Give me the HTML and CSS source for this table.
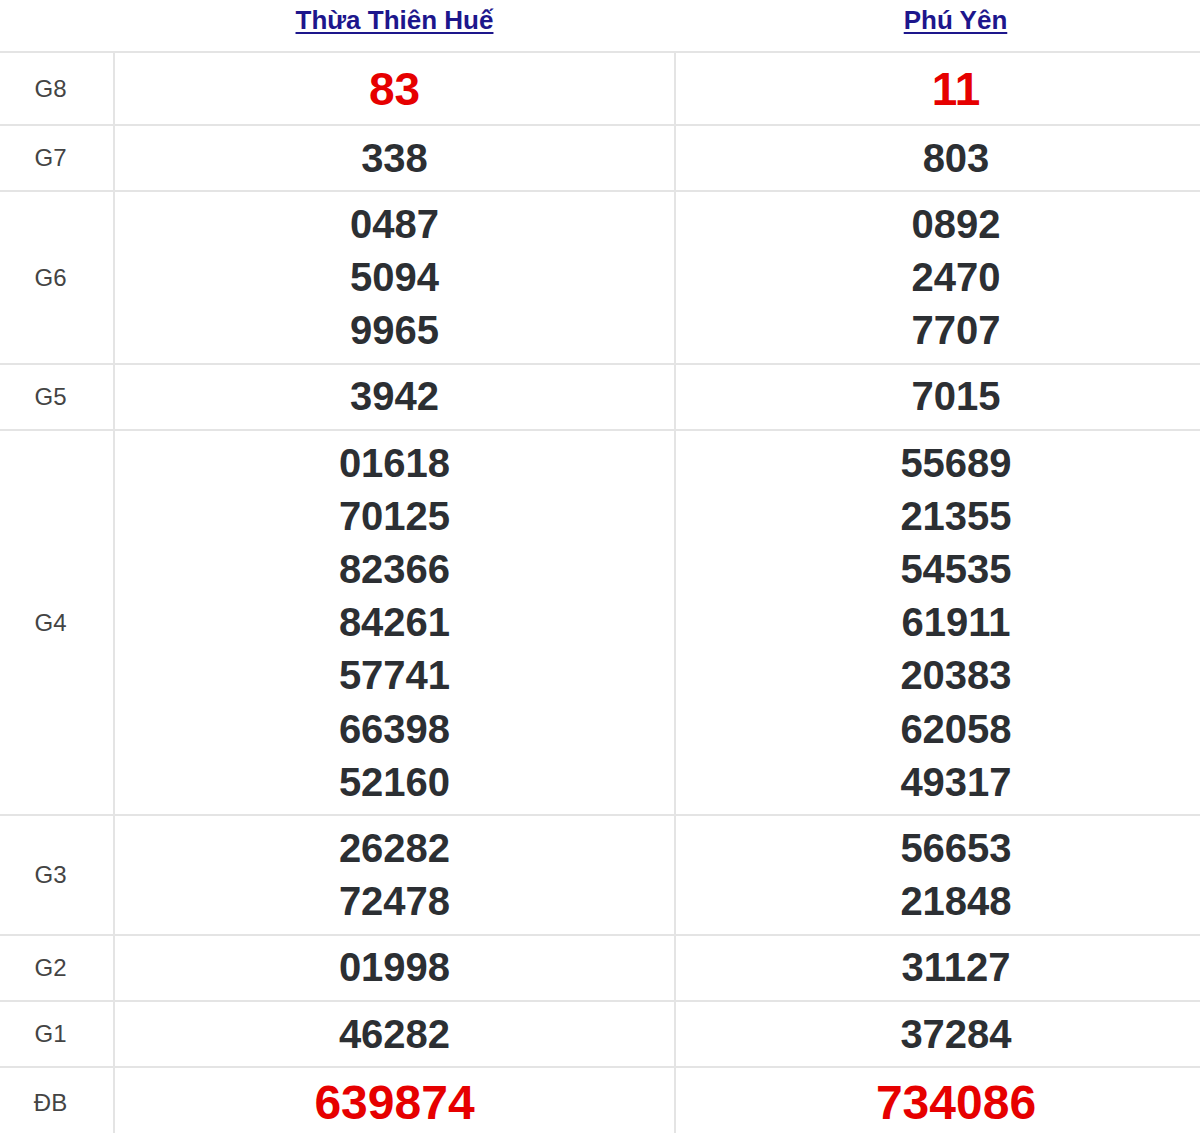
FILE: index.html
```html
<!DOCTYPE html>
<html lang="vi">
<head>
<meta charset="utf-8">
<title>Kết quả xổ số</title>
<link rel="stylesheet" href="styles.css">
</head>
<body>
<div class="wrap">
<table class="kq">
  <colgroup>
    <col class="c-label">
    <col class="c-prov">
    <col class="c-prov">
  </colgroup>
  <thead>
    <tr>
      <th class="h-label"></th>
      <th class="h-prov"><a href="#">Thừa Thiên Huế</a></th>
      <th class="h-prov"><a href="#">Phú Yên</a></th>
    </tr>
  </thead>
  <tbody>
    <tr class="g8">
      <td class="lbl">G8</td>
      <td class="num red"><div>83</div></td>
      <td class="num red"><div>11</div></td>
    </tr>
    <tr>
      <td class="lbl">G7</td>
      <td class="num"><div>338</div></td>
      <td class="num"><div>803</div></td>
    </tr>
    <tr>
      <td class="lbl">G6</td>
      <td class="num"><div>0487</div><div>5094</div><div>9965</div></td>
      <td class="num"><div>0892</div><div>2470</div><div>7707</div></td>
    </tr>
    <tr>
      <td class="lbl">G5</td>
      <td class="num"><div>3942</div></td>
      <td class="num"><div>7015</div></td>
    </tr>
    <tr>
      <td class="lbl">G4</td>
      <td class="num"><div>01618</div><div>70125</div><div>82366</div><div>84261</div><div>57741</div><div>66398</div><div>52160</div></td>
      <td class="num"><div>55689</div><div>21355</div><div>54535</div><div>61911</div><div>20383</div><div>62058</div><div>49317</div></td>
    </tr>
    <tr>
      <td class="lbl">G3</td>
      <td class="num"><div>26282</div><div>72478</div></td>
      <td class="num"><div>56653</div><div>21848</div></td>
    </tr>
    <tr>
      <td class="lbl">G2</td>
      <td class="num"><div>01998</div></td>
      <td class="num"><div>31127</div></td>
    </tr>
    <tr>
      <td class="lbl">G1</td>
      <td class="num"><div>46282</div></td>
      <td class="num"><div>37284</div></td>
    </tr>
    <tr class="db">
      <td class="lbl">ĐB</td>
      <td class="num red"><div>639874</div></td>
      <td class="num red"><div>734086</div></td>
    </tr>
  </tbody>
</table>
</div>
</body>
</html>
```
FILE: styles.css
```css
html, body {
  margin: 0;
  padding: 0;
  background: #ffffff;
}

body {
  font-family: "Liberation Sans", Arial, sans-serif;
  overflow: hidden;
}

.wrap {
  width: 1236px;
}

.kq {
  width: 1236px;
  border-collapse: collapse;
  table-layout: fixed;
}

.c-label { width: 114px; }
.c-prov { width: 561px; }

.h-label,
.h-prov {
  height: 51px;
  padding: 0;
  vertical-align: top;
  text-align: center;
  border-bottom: 2px solid #e4e4e4;
}

.h-prov a {
  display: inline-block;
  line-height: 40px;
  font-size: 26px;
  font-weight: bold;
  color: #1d168c;
  text-decoration: underline;
  text-decoration-thickness: 2px;
  text-underline-offset: 3px;
}

.kq tbody td {
  border-bottom: 2px solid #e4e4e4;
}

.lbl {
  width: 114px;
  padding: 0 12px 0 0;
  text-align: center;
  vertical-align: middle;
  font-size: 24px;
  color: #444444;
  border-right: 2px solid #e4e4e4;
}

.num {
  padding: 5.5px 0;
  text-align: center;
  vertical-align: middle;
  font-size: 40px;
  font-weight: bold;
  line-height: 53.2px;
  color: #2c2f33;
}

.num + .num {
  border-left: 2px solid #e4e4e4;
}

.g8 .num {
  font-size: 46px;
  line-height: 60px;
}

.db .num {
  font-size: 48px;
  line-height: 58px;
}

.red {
  color: #e60000;
}
```
